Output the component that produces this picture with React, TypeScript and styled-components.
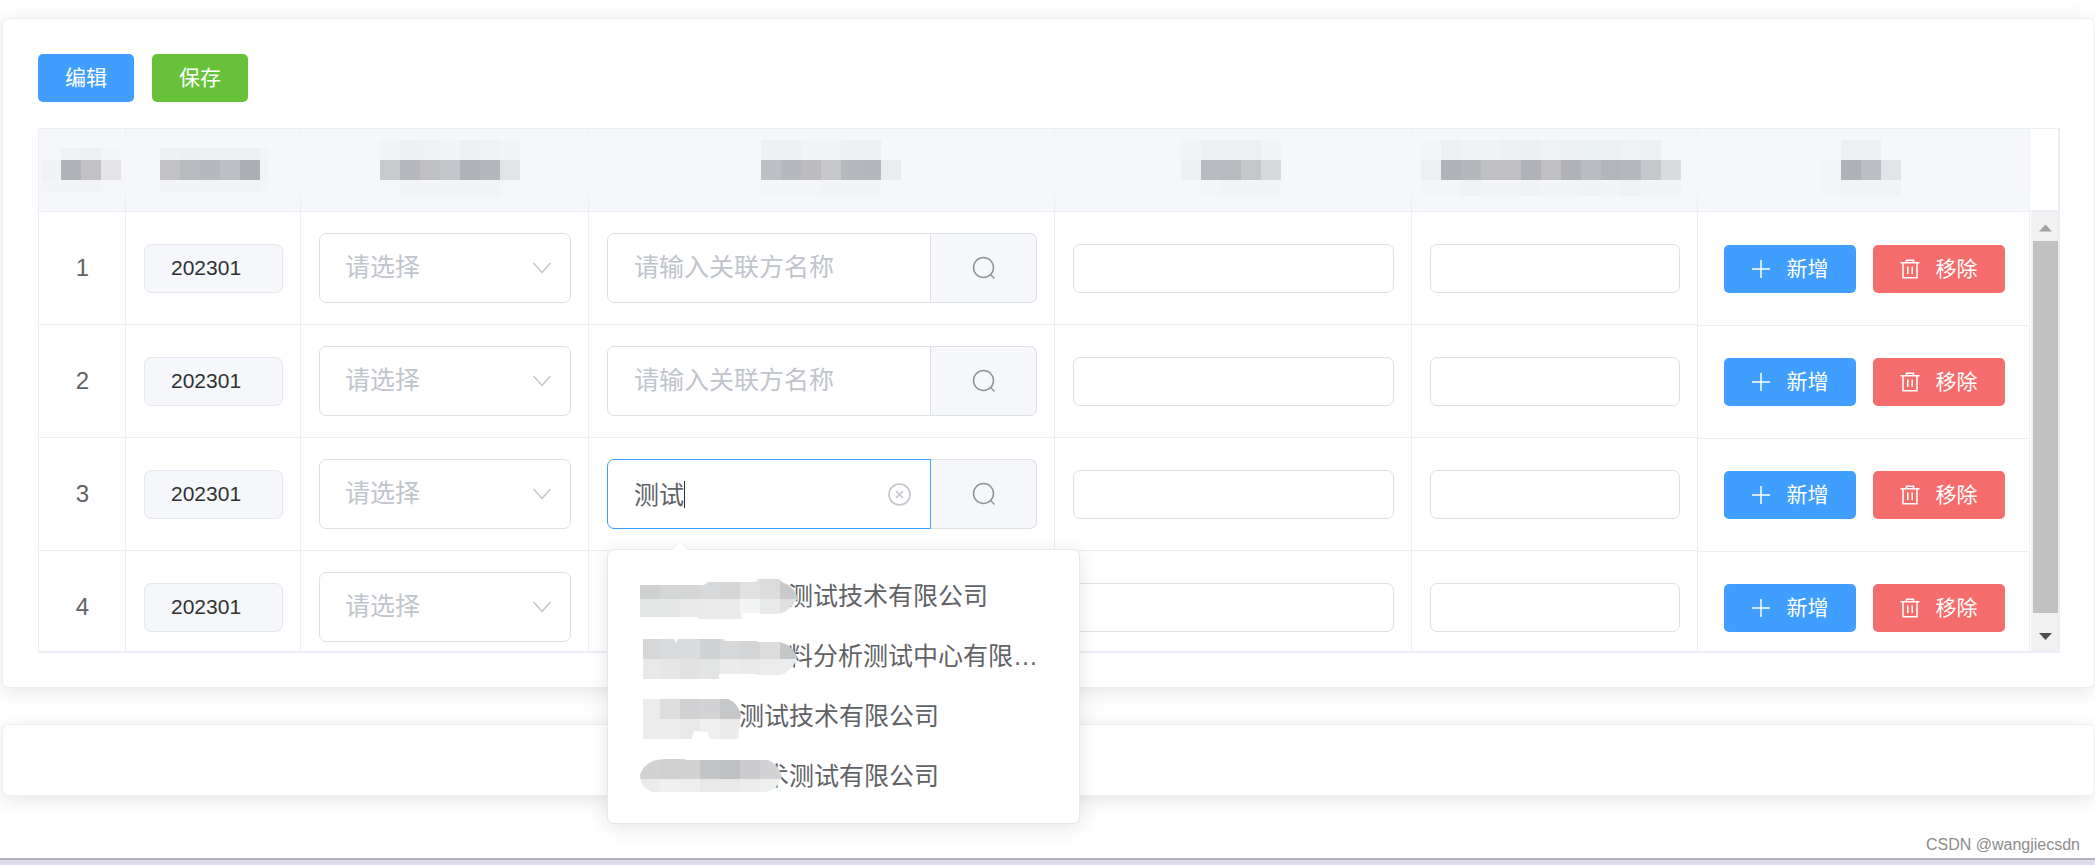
import React, { useLayoutEffect, useRef, useState } from "react";
import styled, { createGlobalStyle, css } from "styled-components";

const color = {
  primary: "#409eff",
  success: "#67c23a",
  danger: "#f56c6c",
  line: "#ebeef5",
  border: "#dcdfe6",
  fill: "#f5f7fb",
  text: "#606266",
  placeholder: "#c0c4cc",
  muted: "#909399",
};

const GlobalStyle = createGlobalStyle`
  * { box-sizing: border-box; }
  body {
    margin: 0;
    background: #fff;
    color: ${color.text};
    font-family: "Liberation Sans", "Noto Sans CJK SC", sans-serif;
    font-size: 25px;
  }
  button, input, select { font-family: inherit; margin: 0; }
`;

const Page = styled.div`
  display: flex;
  flex-direction: column;
  min-height: 100vh;
  overflow: hidden;
`;

const Main = styled.main`
  display: flex;
  flex: 1;
  flex-direction: column;
  gap: 36px;
  padding: 18px 0 24px 2px;
`;

const Card = styled.section`
  min-height: 72px;
  padding: 34px 34px 34px 35px;
  border: 1px solid ${color.line};
  border-radius: 7px;
  background: #fff;
  box-shadow: 0 4px 21px rgba(0, 0, 0, 0.1);
`;

const EmptyCard = styled(Card)`
  padding: 0;
`;

const Toolbar = styled.div`
  display: flex;
  gap: 18px;
  padding: 1px 0 26px;
`;

type Tone = "primary" | "success" | "danger";

const Button = styled.button<{ $tone: Tone }>`
  display: inline-flex;
  align-items: center;
  justify-content: center;
  gap: 16px;
  height: 48px;
  padding: 0 27px;
  border: 0;
  border-radius: 5px;
  background: ${(p) => color[p.$tone]};
  color: #fff;
  font-size: 21px;
  line-height: 24px;
  white-space: nowrap;
`;

const TableFrame = styled.div`
  display: grid;
  grid-template-columns: minmax(0, 1fr) 28px;
  border: solid ${color.line};
  border-width: 1px 2px 2px 1px;
`;

const TableClip = styled.div`
  max-height: 522px;
  overflow: hidden;
`;

const Table = styled.table`
  width: 100%;
  table-layout: fixed;
  border-collapse: separate;
  border-spacing: 0;
`;

const HeadCell = styled.th`
  height: 83px;
  padding: 0;
  border-bottom: 1px solid ${color.line};
  background:
    linear-gradient(${color.line} 0 10px, ${color.fill} 10px 66px, ${color.line} 66px) right / 1px 100% no-repeat,
    ${color.fill};

  > svg { display: block; margin: 0 auto; }
`;

const Cell = styled.td<{ $action?: boolean }>`
  height: 113px;
  padding: 0 17px 0 18px;
  border-right: 1px solid ${color.line};
  font-size: 24px;
  text-align: center;
  vertical-align: middle;
  ${(p) =>
    p.$action
      ? css`box-shadow: 0 1px ${color.line};`
      : css`border-bottom: 1px solid ${color.line};`}
`;

const Actions = styled.div`
  display: flex;
  justify-content: center;
  gap: 17px;
  padding-top: 1px;

  ${Button} {
    width: 132px;
    padding: 0;
  }
`;

const SmallInput = styled.input`
  display: block;
  width: 100%;
  height: 49px;
  padding: 0 26px;
  border: 1px solid ${color.border};
  border-radius: 7px;
  background: #fff;
  color: #303133;
  font-size: 21px;
  outline: 0;

  &:read-only {
    border-color: #e4e7ed;
    background: ${color.fill};
  }
`;

const SelectBox = styled.div`
  display: grid;
  align-items: center;

  > * { grid-area: 1 / 1; }
  > svg {
    justify-self: end;
    margin-right: 20px;
    pointer-events: none;
  }
`;

const Select = styled.select`
  width: 100%;
  height: 70px;
  padding: 0 25px 2px;
  appearance: none;
  border: 1px solid ${color.border};
  border-radius: 7px;
  background: #fff;
  color: ${color.placeholder};
  font-size: 25px;
  outline: 0;
`;

const SearchGroup = styled.div`
  display: flex;
  height: 70px;
`;

const SearchField = styled.div<{ $active: boolean }>`
  display: flex;
  flex: 1;
  align-items: center;
  min-width: 0;
  padding: 0 19px 0 26px;
  border: 1px solid ${(p) => (p.$active ? color.primary : color.border)};
  border-radius: 7px 0 0 7px;
`;

const SearchInput = styled.input<{ $active: boolean }>`
  ${(p) => (p.$active ? css`field-sizing: content;` : css`flex: 1; width: 0;`)}
  height: 60px;
  padding: 0 0 2px;
  border: 0;
  background: transparent;
  color: ${color.text};
  caret-color: transparent;
  font-size: 25px;
  outline: 0;

  &::placeholder { color: ${color.placeholder}; opacity: 1; }
`;

const Caret = styled.span`
  width: 1px;
  height: 27px;
  margin-right: auto;
  background: #303133;
`;

const IconButton = styled.button`
  display: flex;
  padding: 0;
  border: 0;
  background: transparent;
`;

const SearchButton = styled.button`
  display: flex;
  align-items: center;
  justify-content: center;
  width: 106px;
  border: 1px solid ${color.border};
  border-left: 0;
  border-radius: 0 7px 7px 0;
  background: ${color.fill};
`;

const Gutter = styled.div`
  display: flex;
  flex-direction: column;
`;

const GutterHead = styled.div`
  height: 83px;
  border-bottom: 2px solid ${color.line};
`;

const Track = styled.div`
  display: flex;
  flex: 1;
  flex-direction: column;
  margin-left: 1px;
  background: #f1f1f1;

  > svg { display: block; margin-left: 8px; }
`;

const Thumb = styled.div`
  flex: 1;
  margin-left: 2px;
  background: #c1c1c1;
`;

const Popup = styled.div`
  position: absolute;
  width: 473px;
  padding: 16px 0 17px;
  border: 1px solid #e4e7ed;
  border-radius: 7px;
  background: #fff;
  box-shadow: 0 4px 21px rgba(0, 0, 0, 0.1);
`;

const PopupArrow = styled.svg`
  position: absolute;
  top: -10px;
  left: 62px;
`;

const OptionList = styled.ul`
  margin: 0;
  padding: 0;
  list-style: none;
`;

const Option = styled.li`
  display: flex;
  height: 60px;
  padding-left: 32px;
  line-height: 60px;
  white-space: nowrap;

  > svg {
    position: relative;
    flex: none;
    overflow: visible;
  }
`;

const Footer = styled.footer`
  height: 7px;
  border-top: 2px solid #afb0ba;
  background: #dcdcea;
`;

const Watermark = styled.div`
  align-self: flex-end;
  padding: 0 15px 4px 0;
  color: #8c8c8c;
  font-size: 16px;
  line-height: 18px;
`;

const PlusIcon = () => (
  <svg width="20" height="20" viewBox="0 0 20 20" stroke="#fff" strokeWidth="1.5" fill="none">
    <path d="M10 1v18M1 10h18" />
  </svg>
);

const TrashIcon = () => (
  <svg width="20" height="20" viewBox="0 0 20 20" stroke="#fff" strokeWidth="1.5" fill="none">
    <path d="M.5 3.8h19M6.5 3.8V1.2h7v2.6M3 3.8v15h14v-15M7.8 7.5v7.5M12.2 7.5v7.5" />
  </svg>
);

const ChevronIcon = () => (
  <svg width="18" height="12" viewBox="0 0 18 12" stroke={color.placeholder} strokeWidth="1.5" fill="none">
    <path d="M.5 1 9 10.5 17.5 1" />
  </svg>
);

const SearchIcon = () => (
  <svg width="24" height="24" viewBox="0 0 24 24" stroke={color.muted} strokeWidth="1.5" fill="none">
    <circle cx="11.5" cy="11.5" r="10" />
    <path d="m18.5 18.5 4 4" />
  </svg>
);

const ClearIcon = () => (
  <svg width="23" height="23" viewBox="0 0 23 23" stroke={color.placeholder} strokeWidth="1.6" fill="none">
    <circle cx="11.5" cy="11.5" r="10.5" />
    <path d="m8 8 7 7m0-7-7 7" />
  </svg>
);

type HeadMosaic = { label: string; col: number; width: number; x: number; y: number; rows: string[][] };

const columns: HeadMosaic[] = [
  { label: "序号", col: 87, width: 84, x: 0, y: 8, rows: [
    ["#f5f6f9", "#f1f2f5", "#eeeff2", "#f4f5f9"],
    ["#f1f2f6", "#afb3b7", "#c1c1c6", "#e4e4e8"],
    ["#f3f4f8", "#f2f3f7", "#f2f3f7", "#f5f6fa"]] },
  { label: "期间", col: 175, width: 108, x: 0, y: 8, rows: [
    ["#eff0f4", "#edeef2", "#eff0f4", "#eeeff3", "#eeeff3", "#f3f4f8"],
    ["#c1c1c6", "#b7babf", "#b5b9be", "#bcbfc4", "#abaeb3", "#f2f3f7"],
    ["#f3f4f8", "#f3f4f8", "#f2f3f7", "#f2f3f7", "#f2f3f7", "#f4f5f9"]] },
  { label: "类型", col: 288, width: 150, x: 10, y: 0, rows: [
    ["#f3f4f8", "#eff0f4", "#f0f1f5", "#f3f4f8", "#eeeff3", "#f0f1f5", "#f3f4f8"],
    ["#c8c9cd", "#b5b9be", "#bfbfc4", "#c3c6ca", "#afb2b7", "#b6b7bc", "#e0e4e7"],
    ["#f5f6fa", "#f3f4f8", "#f3f4f8", "#f3f4f8", "#f3f4f8", "#f2f3f7", "#f5f6fa"]] },
  { label: "关联方名称", col: 466, width: 157, x: 17, y: 0, rows: [
    ["#eff0f4", "#eeeff3", "#f2f3f7", "#f2f3f7", "#eff0f4", "#eeeff3", "#f5f7fb"],
    ["#bcbfc4", "#b5b9be", "#bbbbc0", "#c7c8cc", "#b5b9be", "#b4b7bc", "#ebecf0"],
    ["#f4f5f9", "#f4f5f9", "#f4f5f9", "#f2f3f7", "#f3f4f8", "#f3f4f8", "#f5f7fb"]] },
  { label: "金额", col: 357, width: 106, x: 0, y: 0, rows: [
    ["#f3f4f8", "#eeeff3", "#eeeff3", "#eeeff3", "#f2f3f7"],
    ["#eff0f4", "#b9babf", "#b8b9be", "#c6c7cb", "#d8d9dd"],
    ["#f5f7fb", "#f4f5f9", "#f2f3f7", "#f3f4f8", "#f3f4f8"]] },
  { label: "备注", col: 286, width: 268, x: 0, y: 0, rows: [
    ["#f4f5f9", "#eeeff3", "#f1f2f6", "#f1f2f6", "#eeeff3", "#edeef2", "#f0f1f5", "#eeeff2", "#ecf1f4", "#eeeff3", "#f0f1f5", "#eeeff3", "#f5f7fb"],
    ["#eeeff2", "#afb3b7", "#b4b7bb", "#bfbfc4", "#bfbfc4", "#afb2b7", "#bfbfc4", "#afb3b8", "#b9bcc1", "#b2b5ba", "#b5b8bc", "#c4c7cb", "#d8dcdd"],
    ["#f4f5f9", "#f4f5f9", "#f1f2f6", "#f3f4f8", "#f3f4f8", "#f1f2f6", "#f3f4f8", "#eff4f7", "#f1f2f6", "#f3f4f8", "#f0f1f5", "#f3f4f8", "#f2f3f7"]] },
  { label: "操作", col: 332, width: 86, x: 0, y: 0, rows: [
    ["#f5f7fb", "#eeeff3", "#ecf1f4", "#f5f7fb"],
    ["#f4f5f8", "#b0b1b7", "#bcbec3", "#e0e4e9"],
    ["#f4f5f8", "#f2f3f7", "#f2f3f7", "#f2f3f7"]] },
];

const HeaderMosaic = ({ label, width, x, y, rows }: HeadMosaic) => (
  <svg width={width} height="60" aria-label={label} shapeRendering="crispEdges">
    {rows.map((row, r) =>
      row.map((fill, i) => {
        const top = r === 0 ? y : r * 20;
        const bottom = r === 2 ? 60 - (y ? 8 : 4) : (r + 1) * 20;
        return <rect key={`${r}-${i}`} x={x + i * 20} y={top} width="20" height={bottom - top} fill={fill} />;
      })
    )}
  </svg>
);

type Suggestion = { text: string; width: number; clip: string; upper: string[]; lower: string[] };

const suggestions: Suggestion[] = [
  {
    text: "测试技术有限公司",
    width: 148,
    clip: "M0 19H64L68 16H116L118 13H139L142 16Q154 20 158 32Q150 45 139 48H120V47H103V53H58V51H0Z",
    upper: ["#cfd0d2", "#d4d5d7", "#d4d5d7", "#d8d9db", "#d5d5d5", "#e1e1e1", "#dcdcdc", "#c9cacc"],
    lower: ["#e4e5e5", "#e4e5e5", "#e9e9e9", "#eaeaea", "#eaeaea", "#f3f5f5", "#e8eae9", "#e0e0e0"],
  },
  {
    text: "料分析测试中心有限…",
    width: 148,
    clip: "M3 13H34L36 17L38 13H83L85 15H117V16H140Q154 20 157 32Q152 46 140 49H117V48H79V53H3Z",
    upper: ["#d6d7d9", "#d9dadc", "#dadbdd", "#d1d2d3", "#d6d7d8", "#d3d4d6", "#dcdcdd", "#c5c6c8"],
    lower: ["#e7e8e8", "#e6e6e7", "#e2e2e3", "#e3e4e4", "#ebebeb", "#e9e9e9", "#ececec", "#ececec"],
  },
  {
    text: "测试技术有限公司",
    width: 99,
    clip: "M3 13H88Q98 17 101 29L98 53H70L67 46L54 45L52 53H3Z",
    upper: ["#ececec", "#dededf", "#d0d1d2", "#d3d3d5", "#c6c7c8", "#c6c7c8"],
    lower: ["#ededed", "#ededed", "#e8e8e9", "#efefef", "#ebebeb", "#ebebeb"],
  },
  {
    text: "术测试有限公司",
    width: 124,
    clip: "M16 14L26 13H44L46 14H128Q138 18 142 30Q138 44 126 46H12Q0 41 0 29Q3 18 16 14Z",
    upper: ["#d2d2d3", "#d0d0d1", "#d3d3d4", "#c4c5c6", "#bfc0c2", "#ccccce", "#d2d3d4", "#d8d8d8"],
    lower: ["#eaebeb", "#f0f0f0", "#edeeee", "#e8e8e8", "#e9e9e9", "#ececed", "#eef0f0", "#eeeeee"],
  },
];

const NameMosaic = ({ id, item }: { id: string; item: Suggestion }) => (
  <svg width={item.width} height="60" aria-hidden="true">
    <clipPath id={id}>
      <path d={item.clip} />
    </clipPath>
    <g clipPath={`url(#${id})`} shapeRendering="crispEdges">
      {item.upper.map((fill, i) => (
        <rect key={`u${i}`} x={i * 20} y="0" width="20" height="33" fill={fill} />
      ))}
      {item.lower.map((fill, i) => (
        <rect key={`l${i}`} x={i * 20} y="33" width="20" height="27" fill={fill} />
      ))}
    </g>
  </svg>
);

const rows = [
  { id: 1, period: "202301", party: "" },
  { id: 2, period: "202301", party: "" },
  { id: 3, period: "202301", party: "测试" },
  { id: 4, period: "202301", party: "" },
];

export default function App() {
  const fieldRef = useRef<HTMLDivElement>(null);
  const [parties, setParties] = useState(rows.map((r) => r.party));
  const [anchor, setAnchor] = useState<{ left: number; top: number } | null>(null);
  const activeRow = 2;

  useLayoutEffect(() => {
    const place = () => {
      const box = fieldRef.current?.getBoundingClientRect();
      if (box) setAnchor({ left: box.left + window.scrollX, top: box.bottom + window.scrollY + 20 });
    };
    place();
    window.addEventListener("resize", place);
    return () => window.removeEventListener("resize", place);
  }, []);

  const setParty = (index: number, value: string) =>
    setParties((list) => list.map((old, i) => (i === index ? value : old)));

  return (
    <Page>
      <GlobalStyle />
      <Main>
        <Card>
          <Toolbar>
            <Button type="button" $tone="primary">编辑</Button>
            <Button type="button" $tone="success">保存</Button>
          </Toolbar>
          <TableFrame>
            <TableClip>
              <Table>
                <colgroup>
                  {columns.map((c) => (
                    <col key={c.label} width={c.col} />
                  ))}
                </colgroup>
                <thead>
                  <tr>
                    {columns.map((c) => (
                      <HeadCell key={c.label} scope="col">
                        <HeaderMosaic {...c} />
                      </HeadCell>
                    ))}
                  </tr>
                </thead>
                <tbody>
                  {rows.map((row, i) => (
                    <tr key={row.id}>
                      <Cell>{row.id}</Cell>
                      <Cell>
                        <SmallInput aria-label="期间" readOnly value={row.period} />
                      </Cell>
                      <Cell>
                        <SelectBox>
                          <Select aria-label="类型" defaultValue="">
                            <option value="">请选择</option>
                          </Select>
                          <ChevronIcon />
                        </SelectBox>
                      </Cell>
                      <Cell>
                        <SearchGroup>
                          <SearchField $active={i === activeRow} ref={i === activeRow ? fieldRef : undefined}>
                            <SearchInput
                              $active={i === activeRow}
                              aria-label="关联方名称"
                              placeholder="请输入关联方名称"
                              value={parties[i]}
                              onChange={(e) => setParty(i, e.target.value)}
                            />
                            {i === activeRow && (
                              <>
                                <Caret aria-hidden="true" />
                                <IconButton type="button" aria-label="清空" onClick={() => setParty(i, "")}>
                                  <ClearIcon />
                                </IconButton>
                              </>
                            )}
                          </SearchField>
                          <SearchButton type="button" aria-label="搜索">
                            <SearchIcon />
                          </SearchButton>
                        </SearchGroup>
                      </Cell>
                      <Cell>
                        <SmallInput aria-label="金额" />
                      </Cell>
                      <Cell>
                        <SmallInput aria-label="备注" />
                      </Cell>
                      <Cell $action>
                        <Actions>
                          <Button type="button" $tone="primary">
                            <PlusIcon />
                            新增
                          </Button>
                          <Button type="button" $tone="danger">
                            <TrashIcon />
                            移除
                          </Button>
                        </Actions>
                      </Cell>
                    </tr>
                  ))}
                </tbody>
              </Table>
            </TableClip>
            <Gutter aria-hidden="true">
              <GutterHead />
              <Track>
                <svg width="13" height="29" viewBox="0 0 13 29">
                  <path d="M0 19.5 6.5 12.5 13 19.5Z" fill="#a3a3a3" />
                </svg>
                <Thumb />
                <svg width="13" height="38" viewBox="0 0 13 38">
                  <path d="M0 20 6.5 27 13 20Z" fill="#505050" />
                </svg>
              </Track>
            </Gutter>
          </TableFrame>
        </Card>
        <EmptyCard />
      </Main>
      <Watermark>CSDN @wangjiecsdn</Watermark>
      <Footer />
      {anchor && (
        <Popup style={{ left: anchor.left, top: anchor.top }}>
          <PopupArrow width="20" height="11" viewBox="0 0 20 11">
            <path d="M1 10.5 10 1.2 19 10.5" fill="#fff" stroke={color.line} />
            <path d="M2 10.5h16" stroke="#fff" strokeWidth="1.5" />
          </PopupArrow>
          <OptionList>
            {suggestions.map((item, i) => (
              <Option key={i}>
                <NameMosaic id={`name-${i}`} item={item} />
                {item.text}
              </Option>
            ))}
          </OptionList>
        </Popup>
      )}
    </Page>
  );
}
